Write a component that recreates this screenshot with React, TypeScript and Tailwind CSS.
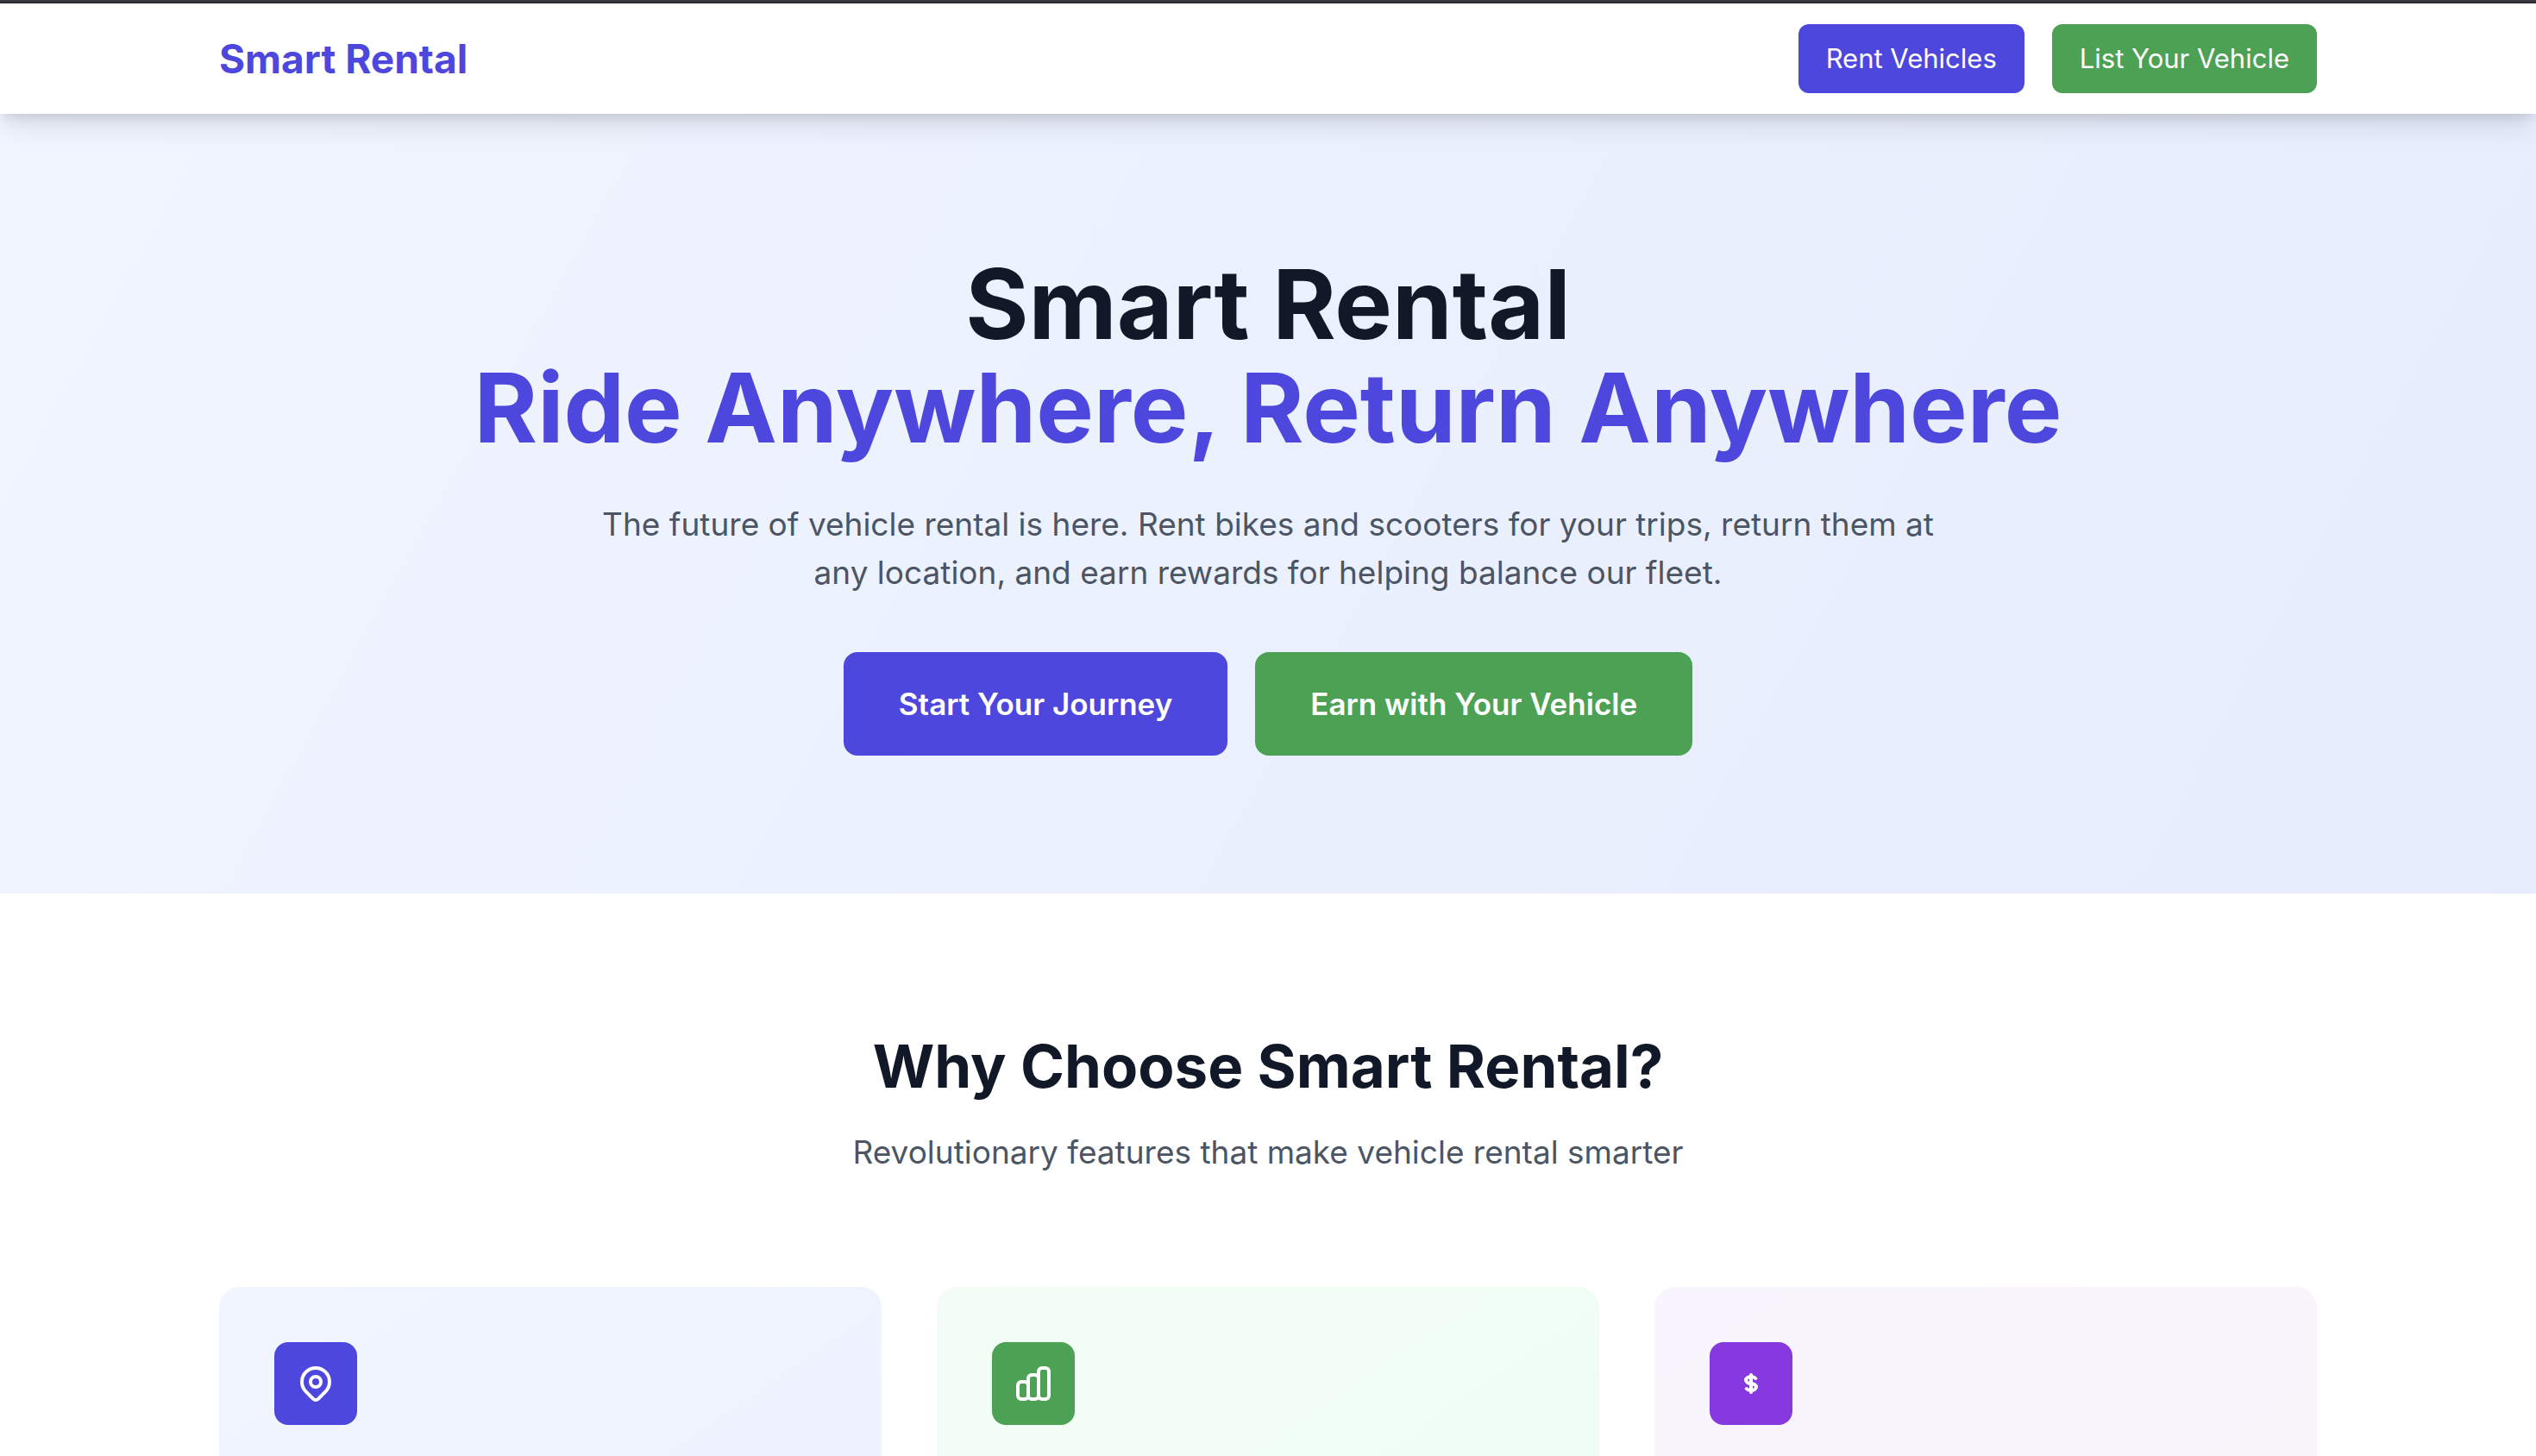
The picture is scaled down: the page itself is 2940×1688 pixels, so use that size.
import type { ReactNode } from "react";

function StrokeIcon({ children }: { children: ReactNode }) {
  return (
    <svg
      className="size-12 text-white"
      viewBox="0 0 24 24"
      fill="none"
      stroke="currentColor"
      strokeWidth={2}
      strokeLinecap="round"
      strokeLinejoin="round"
      aria-hidden="true"
    >
      {children}
    </svg>
  );
}

const features = [
  {
    id: "locations",
    card: "from-[#f0f5ff] to-[#eef1fe]",
    tile: "bg-[#4d47dd]",
    icon: (
      <>
        <path d="M17.657 16.657L13.414 20.9a1.998 1.998 0 01-2.827 0l-4.244-4.243a8 8 0 1111.314 0z" />
        <path d="M15 11a3 3 0 11-6 0 3 3 0 016 0z" />
      </>
    ),
  },
  {
    id: "balance",
    card: "from-[#f3fdf5] to-[#eefdf5]",
    tile: "bg-[#4da154]",
    icon: (
      <path d="M9 19v-6a2 2 0 00-2-2H5a2 2 0 00-2 2v6a2 2 0 002 2h2a2 2 0 002-2zm0 0V9a2 2 0 012-2h2a2 2 0 012 2v10m-6 0a2 2 0 002 2h2a2 2 0 002-2m0 0V5a2 2 0 012-2h2a2 2 0 012 2v14a2 2 0 01-2 2h-2a2 2 0 01-2-2z" />
    ),
  },
  {
    id: "rewards",
    card: "from-[#f8f5fe] to-[#faf2f8]",
    tile: "bg-[#8639df]",
    icon: (
      <path d="M12 8c-1.657 0-3 .895-3 2s1.343 2 3 2 3 .895 3 2-1.343 2-3 2m0-8c1.11 0 2.08.402 2.599 1M12 8V7m0 1v8m0 0v1m0-1c-1.11 0-2.08-.402-2.599-1" />
    ),
  },
];

export default function App() {
  return (
    <div className="h-screen overflow-hidden bg-white font-['Inter','Liberation_Sans',sans-serif] text-[#111827]">
      <div className="h-1 border-t-2 border-[#3b3a40] bg-[#2c2b30]" />
      <nav className="relative z-10 bg-white shadow-[0_20px_30px_-6px_rgba(0,0,0,0.1),0_8px_12px_-4px_rgba(0,0,0,0.1)]">
        <div className="mx-auto flex h-32 max-w-[2560px] items-center justify-between px-16">
          <a href="#" className="text-[46px] leading-16 font-bold text-[#4d47dd]">
            Smart Rental
          </a>
          <div className="flex gap-8">
            <button className="rounded-xl bg-[#4d47dd] px-8 py-4 text-[31px] leading-12 text-white">
              Rent Vehicles
            </button>
            <button className="rounded-xl bg-[#4da154] px-8 py-4 text-[31px] leading-12 text-white">
              List Your Vehicle
            </button>
          </div>
        </div>
      </nav>

      <section className="bg-linear-to-br from-[#f0f5ff] to-[#e0e6fc] bg-size-[100%_5300px] bg-no-repeat py-40">
        <div className="mx-auto max-w-[2560px] px-16 text-center">
          <h1 className="mb-12 text-[112px] leading-30 font-bold">
            <span className="block">Smart Rental</span>
            <span className="block text-[#4d47dd]">Ride Anywhere, Return Anywhere</span>
          </h1>
          <p className="mx-auto mb-16 max-w-[1560px] text-[37px] leading-14 text-[#4b5563]">
            The future of vehicle rental is here. Rent bikes and scooters for your trips, return them at any location,
            and earn rewards for helping balance our fleet.
          </p>
          <div className="flex justify-center gap-8">
            <button className="rounded-2xl bg-[#4d47dd] px-16 py-8 text-[35px] leading-14 font-semibold text-white">
              Start Your Journey
            </button>
            <button className="rounded-2xl bg-[#4da154] px-16 py-8 text-[35px] leading-14 font-semibold text-white">
              Earn with Your Vehicle
            </button>
          </div>
        </div>
      </section>

      <section className="bg-white py-40">
        <div className="mx-auto max-w-[2560px] px-16">
          <div className="mb-32 text-center">
            <h2 className="mb-8 text-[69px] leading-20 font-bold">Why Choose Smart Rental?</h2>
            <p className="text-[37px] leading-14 text-[#4b5563]">
              Revolutionary features that make vehicle rental smarter
            </p>
          </div>
          <div className="grid grid-cols-3 gap-16">
            {features.map((feature) => (
              <article key={feature.id} className={`min-h-[528px] rounded-3xl bg-linear-to-br p-16 ${feature.card}`}>
                <div className={`flex size-24 items-center justify-center rounded-2xl ${feature.tile}`}>
                  <StrokeIcon>{feature.icon}</StrokeIcon>
                </div>
              </article>
            ))}
          </div>
        </div>
      </section>
    </div>
  );
}
